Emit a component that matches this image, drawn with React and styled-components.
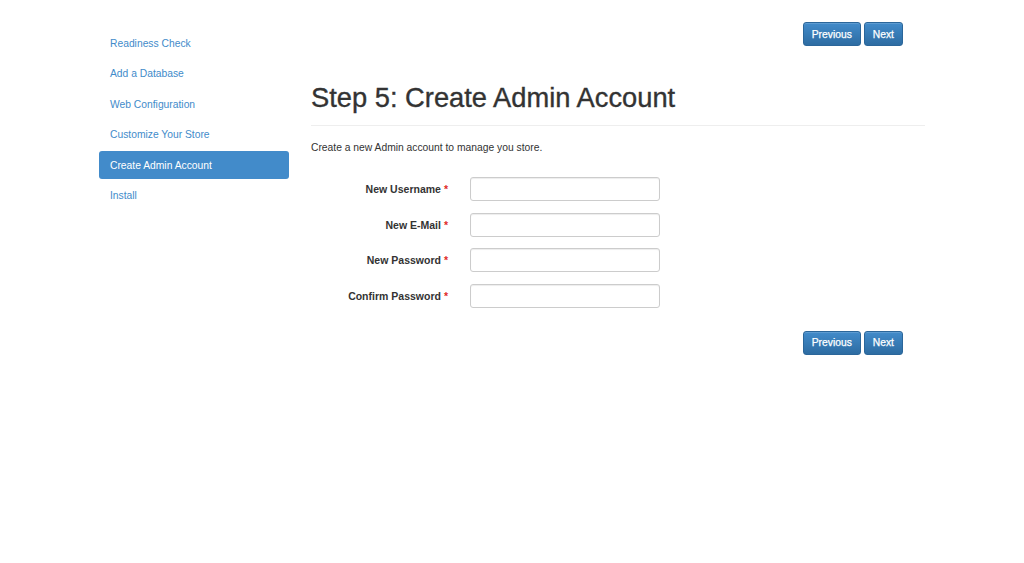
import React from "react";
import styled, { createGlobalStyle } from "styled-components";

const GlobalStyle = createGlobalStyle`
  html, body {
    margin: 0;
    padding: 0;
    background: #fff;
  }
  body {
    font-family: "Liberation Sans", Arial, Helvetica, sans-serif;
    font-size: 10.3px;
    color: #333;
  }
  * {
    box-sizing: border-box;
  }
`;

const Page = styled.div`
  width: 826px;
  margin: 0 auto;
  padding-top: 22px;
  display: grid;
  grid-template-columns: 190px 1fr;
  column-gap: 22px;
`;

const Sidebar = styled.ul`
  list-style: none;
  margin: 7px 0 0;
  padding: 0;
  display: flex;
  flex-direction: column;
  gap: 2.5px;
`;

const NavItem = styled.li`
  height: 28px;
  display: flex;
  align-items: center;
  padding: 0 11px;
  border-radius: 3px;
  font-size: 10.3px;
  color: ${(props) => (props.active ? "#fff" : "#428bca")};
  background: ${(props) => (props.active ? "#428bca" : "transparent")};
`;

const Main = styled.div`
  display: flex;
  flex-direction: column;
`;

const ButtonBar = styled.div`
  display: flex;
  justify-content: flex-end;
  gap: 3px;
  padding-right: 22px;
  margin-top: ${(props) => props.top || "0"};
`;

const Button = styled.button`
  height: 24px;
  padding: 0 8px;
  font-family: "Liberation Sans", Arial, Helvetica, sans-serif;
  font-size: 10.3px;
  font-weight: normal;
  -webkit-text-stroke: 0.25px #fff;
  color: #fff;
  border: 1px solid #2b669a;
  border-radius: 3px;
  background: linear-gradient(to bottom, #428bca 0%, #2d6ca2 100%);
  box-shadow: inset 0 1px 0 rgba(255, 255, 255, 0.15);
  cursor: pointer;
`;

const Title = styled.h1`
  margin: 37px 0 0;
  padding-bottom: 12px;
  border-bottom: 1px solid #eee;
  font-size: 27.3px;
  font-weight: 500;
  line-height: 30px;
  color: #333;
  -webkit-text-stroke: 0.35px #333;
`;

const Intro = styled.p`
  margin: 14px 0 0;
  font-size: 10.3px;
  line-height: 16px;
`;

const Form = styled.form`
  margin-top: 21px;
  display: flex;
  flex-direction: column;
  gap: 11.5px;
`;

const Row = styled.div`
  display: grid;
  grid-template-columns: 137px 190px;
  column-gap: 22px;
  align-items: center;
`;

const Label = styled.label`
  text-align: right;
  font-weight: bold;
  font-size: 10.5px;
  color: #333;
`;

const Required = styled.span`
  color: #e02b27;
  margin-left: 3px;
`;

const Input = styled.input`
  height: 24px;
  width: 190px;
  border: 1px solid #ccc;
  border-radius: 3px;
  box-shadow: inset 0 1px 1px rgba(0, 0, 0, 0.075);
  padding: 0 8px;
  font-size: 10.3px;
`;

const steps = [
  "Readiness Check",
  "Add a Database",
  "Web Configuration",
  "Customize Your Store",
  "Create Admin Account",
  "Install",
];

const fields = [
  { label: "New Username", type: "text" },
  { label: "New E-Mail", type: "email" },
  { label: "New Password", type: "password" },
  { label: "Confirm Password", type: "password" },
];

function Nav({ top }) {
  return (
    <ButtonBar top={top}>
      <Button type="button">Previous</Button>
      <Button type="button">Next</Button>
    </ButtonBar>
  );
}

export default function App() {
  return (
    <>
      <GlobalStyle />
      <Page>
        <Sidebar>
          {steps.map((step, i) => (
            <NavItem key={step} active={i === 4}>
              {step}
            </NavItem>
          ))}
        </Sidebar>
        <Main>
          <Nav />
          <Title>Step 5: Create Admin Account</Title>
          <Intro>Create a new Admin account to manage you store.</Intro>
          <Form>
            {fields.map((f) => (
              <Row key={f.label}>
                <Label>
                  {f.label}
                  <Required>*</Required>
                </Label>
                <Input type={f.type} />
              </Row>
            ))}
          </Form>
          <Nav top="23px" />
        </Main>
      </Page>
    </>
  );
}
